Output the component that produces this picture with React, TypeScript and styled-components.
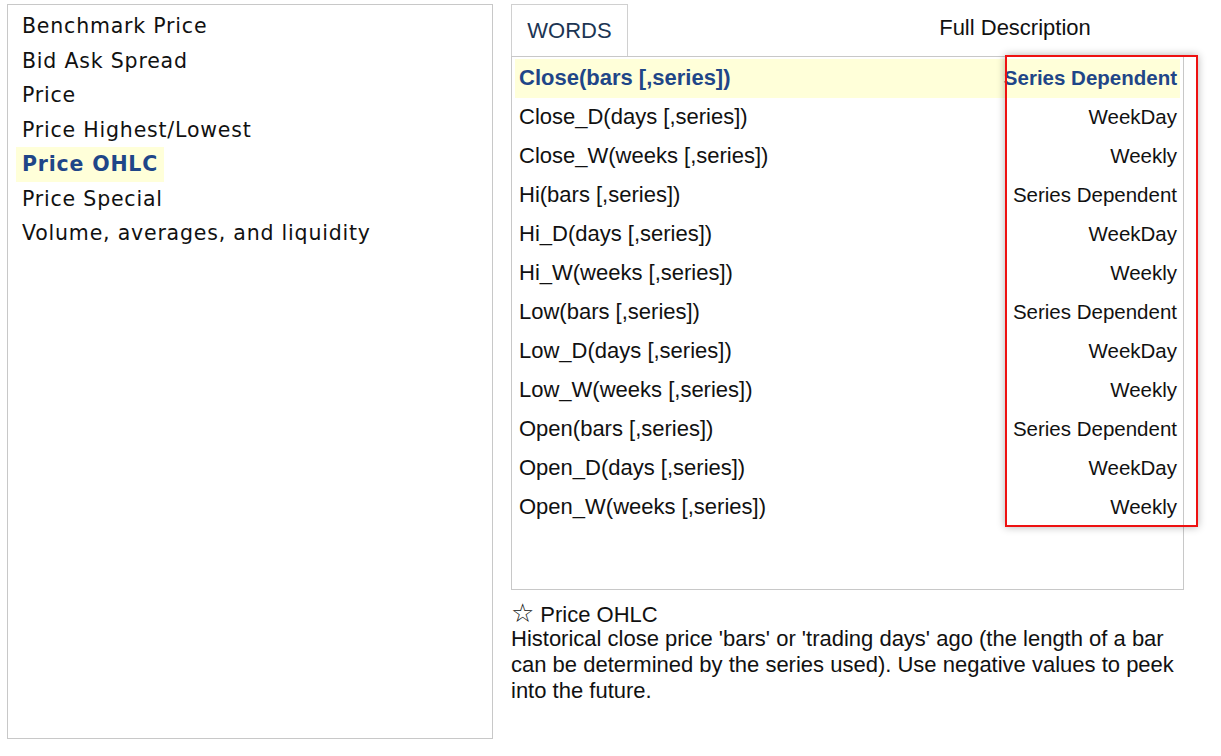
import React from "react";
import styled, { createGlobalStyle } from "styled-components";

const GlobalStyle = createGlobalStyle`
  html, body {
    margin: 0;
    padding: 0;
    background: #fff;
  }
`;

const Page = styled.div`
  display: grid;
  grid-template-columns: 486px 673px;
  column-gap: 18px;
  padding: 4px 7px;
  font-family: "Liberation Sans", Arial, sans-serif;
  color: #111;
`;

const CategoryPanel = styled.div`
  height: 735px;
  box-sizing: border-box;
  border: 1px solid #c8c8c8;
  padding: 4px 8px;
  display: flex;
  flex-direction: column;
  align-items: flex-start;
`;

const Category = styled.div<{ $active?: boolean }>`
  font-family: "DejaVu Sans", Verdana, sans-serif;
  font-size: 20.5px;
  letter-spacing: 0.8px;
  line-height: 34.5px;
  padding: 0 6px;
  color: ${(p) => (p.$active ? "#1f4688" : "#111")};
  font-weight: ${(p) => (p.$active ? "bold" : "normal")};
  background: ${(p) => (p.$active ? "#ffffd9" : "transparent")};
`;

const RightPanel = styled.div`
  position: relative;
  display: flex;
  flex-direction: column;
`;

const TabRow = styled.div`
  display: flex;
  align-items: stretch;
  height: 52px;
`;

const Tab = styled.div`
  width: 117px;
  box-sizing: border-box;
  border: 1px solid #d0d0d0;
  border-bottom: none;
  display: flex;
  align-items: center;
  justify-content: center;
  font-size: 22px;
  color: #1c3553;
`;

const TabTitle = styled.div`
  flex: 1;
  text-align: center;
  font-size: 22px;
  line-height: 48px;
  padding-left: 218px;
`;

const Table = styled.div`
  height: 534px;
  box-sizing: border-box;
  border: 1px solid #c8c8c8;
  padding: 2px 3px;
`;

const Row = styled.div<{ $active?: boolean }>`
  display: flex;
  justify-content: space-between;
  align-items: center;
  height: 39px;
  padding: 0 3px 1px 4px;
  box-sizing: border-box;
  font-size: 22px;
  background: ${(p) => (p.$active ? "#ffffd9" : "transparent")};
  color: ${(p) => (p.$active ? "#1f4688" : "#111")};
  font-weight: ${(p) => (p.$active ? "bold" : "normal")};
`;

const Name = styled.span``;

const Kind = styled.span`
  font-size: 20.5px;
  text-align: right;
`;

const Highlight = styled.div`
  position: absolute;
  left: 494px;
  top: 51px;
  width: 193px;
  height: 472px;
  box-sizing: border-box;
  border: 2px solid #ee1111;
  box-shadow: 0 0 8px rgba(0, 0, 0, 0.3);
  pointer-events: none;
`;

const Description = styled.div`
  margin-top: 10px;
  font-size: 22px;
  line-height: 26px;
  padding-right: 4px;
`;

const Heading = styled.div`
  height: 26px;
`;

const Star = styled.span`
  font-family: "DejaVu Sans", sans-serif;
  font-size: 26px;
  line-height: 26px;
  margin-right: 6px;
`;

const categories = [
  "Benchmark Price",
  "Bid Ask Spread",
  "Price",
  "Price Highest/Lowest",
  "Price OHLC",
  "Price Special",
  "Volume, averages, and liquidity",
];

const words = [
  ["Close(bars [,series])", "Series Dependent"],
  ["Close_D(days [,series])", "WeekDay"],
  ["Close_W(weeks [,series])", "Weekly"],
  ["Hi(bars [,series])", "Series Dependent"],
  ["Hi_D(days [,series])", "WeekDay"],
  ["Hi_W(weeks [,series])", "Weekly"],
  ["Low(bars [,series])", "Series Dependent"],
  ["Low_D(days [,series])", "WeekDay"],
  ["Low_W(weeks [,series])", "Weekly"],
  ["Open(bars [,series])", "Series Dependent"],
  ["Open_D(days [,series])", "WeekDay"],
  ["Open_W(weeks [,series])", "Weekly"],
];

export default function App() {
  return (
    <>
      <GlobalStyle />
      <Page>
        <CategoryPanel>
          {categories.map((c) => (
            <Category key={c} $active={c === "Price OHLC"}>
              {c}
            </Category>
          ))}
        </CategoryPanel>

        <RightPanel>
          <TabRow>
            <Tab>WORDS</Tab>
            <TabTitle>Full Description</TabTitle>
          </TabRow>
          <Table>
            {words.map(([name, kind], i) => (
              <Row key={name} $active={i === 0}>
                <Name>{name}</Name>
                <Kind>{kind}</Kind>
              </Row>
            ))}
          </Table>
          <Description>
            <Heading>
              <Star>☆</Star>Price OHLC
            </Heading>
            Historical close price 'bars' or 'trading days' ago (the length of a bar can be
            determined by the series used). Use negative values to peek into the future.
          </Description>
          <Highlight />
        </RightPanel>
      </Page>
    </>
  );
}
